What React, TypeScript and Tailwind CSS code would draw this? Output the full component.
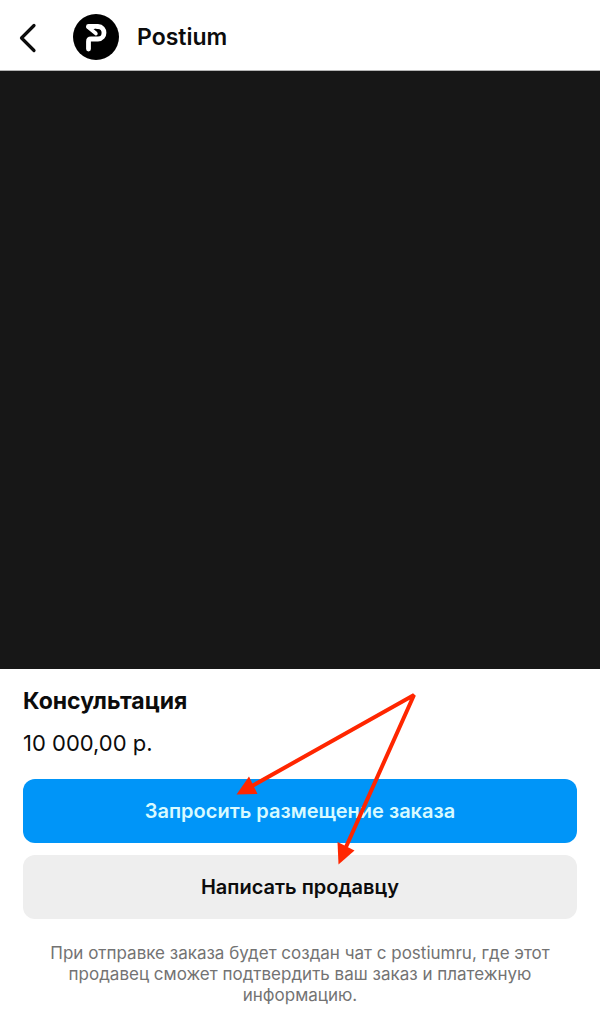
import React from 'react';

function Logo() {
  return (
    <svg viewBox="0 0 46 46" className="w-[46px] h-[46px] shrink-0" aria-hidden="true">
      <circle cx="23" cy="23" r="23" fill="#000" />
      <path
        d="M15.500 35V27.500Q15.500 25 18 25H25C33 25 33 12.500 25 12.500H15.500"
        fill="none"
        stroke="#fff"
        strokeWidth="4.8"
        strokeLinecap="round"
        strokeLinejoin="round"
      />
      <path d="M15 13L23 19.500" stroke="#fff" strokeWidth="3.6" strokeLinecap="round" />
      <path d="M21.500 14.500Q28 15 25 20.500Q25 17.500 21.500 14.500Z" fill="#000" />
    </svg>
  );
}

function Arrows() {
  return (
    <svg
      viewBox="0 0 184 180"
      className="absolute top-[21px] left-1/2 -translate-x-16 w-[184px] h-[180px] pointer-events-none"
      aria-hidden="true"
    >
      <path
        d="M16 96L178 5L110 157"
        fill="none"
        stroke="#ff2600"
        strokeWidth="4"
        strokeLinejoin="bevel"
      />
      <path d="M0.500 104.500L13 86.500L21.500 104Z" fill="#ff2600" />
      <path d="M102.500 174.500L101.500 152L118.500 160.500Z" fill="#ff2600" />
    </svg>
  );
}

export default function App() {
  return (
    <div className="min-h-screen flex flex-col bg-white text-[#0c0c0c] font-['Inter','Liberation_Sans',sans-serif]">
      {/* Header */}
      <header className="flex items-center h-[71px] pt-1 pl-4 border-b border-[#b5b5b5]">
        <button type="button" aria-label="Назад" className="w-6 h-8 flex items-center justify-center">
          <svg viewBox="0 0 24 32" className="w-6 h-8" fill="none" stroke="currentColor" strokeWidth="3.2" strokeLinecap="round" strokeLinejoin="round">
            <path d="M18 4.500L5.500 17L18 29.500" />
          </svg>
        </button>
        <a href="#" className="flex items-center gap-[18px] ml-[33px]">
          <Logo />
          <span className="text-[23px] leading-7 font-semibold">Postium</span>
        </a>
      </header>

      {/* Product picture */}
      <div className="h-[598px] bg-[#171717]" />

      {/* Product details */}
      <main className="relative px-[23px] pt-[18px] pb-3">
        <h1 className="text-[23px] leading-7 font-bold">Консультация</h1>
        <p className="mt-3.5 text-[22px] leading-7">10 000,00 р.</p>
        <div className="flex flex-col gap-3 mt-[22px]">
          <button type="button" className="h-16 rounded-xl bg-[#0095f8] text-[#d8faff] text-xl font-semibold">
            Запросить размещение заказа
          </button>
          <button type="button" className="h-16 rounded-xl bg-[#eeeeee] text-xl font-semibold">
            Написать продавцу
          </button>
        </div>
        <p className="mt-6 px-2 text-center text-[17px] leading-[21px] text-[#737373]">
          При отправке заказа будет создан чат с postiumru, где этот продавец сможет подтвердить ваш заказ и платежную информацию.
        </p>
        <Arrows />
      </main>
    </div>
  );
}
